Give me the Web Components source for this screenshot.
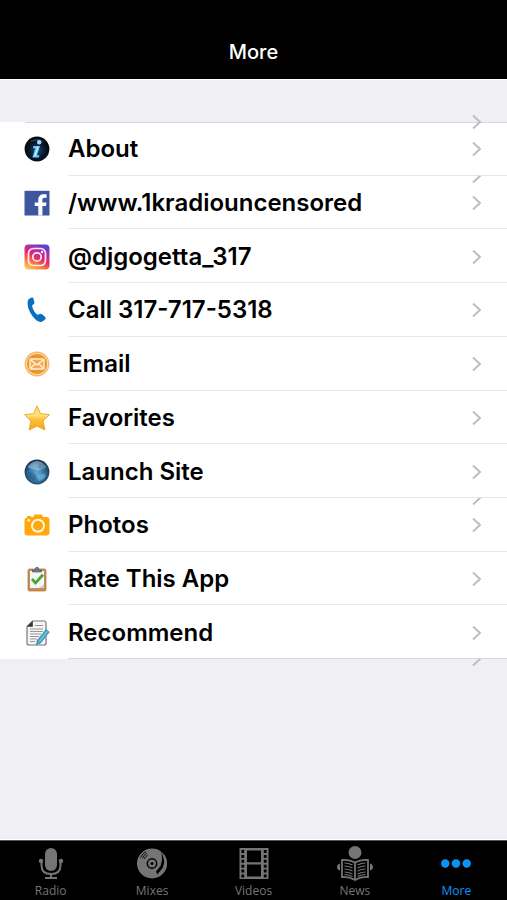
<!DOCTYPE html>
<html lang="en">
<head>
<meta charset="utf-8">
<meta name="viewport" content="width=device-width, initial-scale=1">
<title>More</title>
<style>
    body {
        margin: 0;
        background: #efeff4;
        font-family: Inter, "Liberation Sans", sans-serif;
    }
</style>
</head>
<body>
<more-screen>
    <nav-header slot="header">More</nav-header>
    <more-list>
        <more-row icon="about" href="#about">About</more-row>
        <more-row icon="facebook" href="#facebook" trace>/www.1kradiouncensored</more-row>
        <more-row icon="instagram" href="#instagram">@djgogetta_317</more-row>
        <more-row icon="call" href="tel:317-717-5318">Call 317-717-5318</more-row>
        <more-row icon="email" href="#email">Email</more-row>
        <more-row icon="favorites" href="#favorites">Favorites</more-row>
        <more-row icon="site" href="#site">Launch Site</more-row>
        <more-row icon="photos" href="#photos" trace>Photos</more-row>
        <more-row icon="rate" href="#rate">Rate This App</more-row>
        <more-row icon="recommend" href="#recommend">Recommend</more-row>
    </more-list>
    <tab-bar slot="footer">
        <tab-item icon="radio" href="#radio">Radio</tab-item>
        <tab-item icon="mixes" href="#mixes">Mixes</tab-item>
        <tab-item icon="videos" href="#videos">Videos</tab-item>
        <tab-item icon="news" href="#news">News</tab-item>
        <tab-item icon="more" href="#more" selected>More</tab-item>
    </tab-bar>
</more-screen>

<script>
"use strict";

const rowIcons = {
    about: `
        <defs>
            <radialGradient id="g" cx=".5" cy=".55" r=".5">
                <stop offset="0" stop-color="#1b4f78"/><stop offset=".6" stop-color="#0a1a2c"/><stop offset="1" stop-color="#04070d"/>
            </radialGradient>
        </defs>
        <circle cx="13" cy="13" r="12.4" fill="url(#g)"/>
        <path d="M5 6.500Q13-1 21 6.500Q13 3.500 5 6.500z" fill="#4a5d6d" opacity=".5"/>
        <circle cx="15.200" cy="6.300" r="2.200" fill="#9adcff"/>
        <path d="M9.500 10h6.500l-3 9.200h2.500l-.7 2.300H8.300l3-9.200H8.900z" fill="#74c8fb"/>
        <path d="M13.900 11l-3.100 9.600" stroke="#d8f4ff" stroke-width="1"/>`,
    facebook: `
        <path d="M.5.800h25v24.700H.5z" fill="#3c579e"/>
        <path d="M14.300 25.500V16h-3.600v-3.500h3.600V9.700c0-3.600 2.200-5.500 5.400-5.500 1.400 0 2.300.1 2.900.2v3.300h-2c-1.700 0-2.200.8-2.200 2.100v2.700h4.100l-.6 3.500h-3.500v9.500z" fill="#fff"/>`,
    instagram: `
        <defs>
            <linearGradient id="g" x1=".15" y1="1" x2=".65" y2="0">
                <stop offset="0" stop-color="#ffca55"/><stop offset=".28" stop-color="#fb7c38"/><stop offset=".52" stop-color="#e42c67"/><stop offset=".76" stop-color="#b42caa"/><stop offset="1" stop-color="#5c43cf"/>
            </linearGradient>
        </defs>
        <rect x=".5" y=".5" width="25" height="25" rx="4" fill="url(#g)"/>
        <g fill="none" stroke="#ffeaf3" stroke-width="1.700">
            <rect x="4.500" y="4.500" width="17" height="17" rx="5"/><circle cx="13" cy="13" r="4.200"/>
        </g>
        <circle cx="18" cy="8" r="1.200" fill="#fff"/>`,
    call: `
        <path d="M4 3.200C5 1.600 7.600.400 8.500.600c1 .1 2.300 5.200 1.800 6-.5.900-1.900 1.200-2.100 2.100-.3 1.500 2.800 7.600 5 8.800 1.200.6 2.300-.9 3.400-.7 1 .2 5.100 3.100 5.100 4.100 0 1.200-2.800 4-5.200 4C11 24.900 1.500 11.500 4 3.200z" fill="#0b6fc0"/>`,
    email: `
        <circle cx="13" cy="13" r="12.400" fill="#f6b86c"/>
        <circle cx="13" cy="13" r="10.600" fill="#ee962d" stroke="#ffe1b5" stroke-width="1"/>
        <g fill="#f6a94e" stroke="#fff3df" stroke-width="1.300" stroke-linejoin="round">
            <rect x="6" y="8" width="14" height="10" rx="1"/>
            <path d="M6.300 8.500l6.700 5.500 6.700-5.500M6.300 17.700l4.800-5M19.700 17.700l-4.800-5" fill="none"/>
        </g>`,
    favorites: `
        <defs>
            <linearGradient id="g" x1="0" y1="0" x2="0" y2="1">
                <stop offset="0" stop-color="#ffd45a"/><stop offset=".4" stop-color="#ffe27c"/><stop offset=".55" stop-color="#ffbf38"/><stop offset="1" stop-color="#f7a51d"/>
            </linearGradient>
        </defs>
        <path d="M13 .8l3.500 7.900 8.900.9-6.300 6.400 1.900 9L13 21.100l-8 3.900 1.900-9L.6 9.600l8.900-.9z" fill="url(#g)" stroke="#e9a52b" stroke-width=".9" stroke-linejoin="round"/>`,
    site: `
        <defs>
            <radialGradient id="g" cx=".5" cy=".55" r=".52">
                <stop offset="0" stop-color="#62abd6"/><stop offset=".65" stop-color="#3472a0"/><stop offset="1" stop-color="#18324e"/>
            </radialGradient>
        </defs>
        <circle cx="13" cy="13" r="12.400" fill="url(#g)"/>
        <path d="M3.500 8q9.500-12 19 0-5 4-9.500 3.500T3.500 8z" fill="#b9d8ea" opacity=".5"/>
        <path d="M15 4l6 2 2 6-4 2-2-3-3-2z" fill="#17395a" opacity=".2"/>
        <path d="M4 13l6 1 3 4-3 4-5-4z" fill="#17395a" opacity=".3"/>
        <path d="M12 17q5-3 10-1-2 5-7 6z" fill="#79c3e8" opacity=".5"/>`,
    photos: `
        <path d="M3 5.500V4h4v1h2l1.500-2.500h7L19 5h3.500Q25.500 5 25.500 8v12.500q0 3-3 3h-19q-3 0-3-3V8Q.5 6 3 5.500z" fill="#ffa70b"/>
        <circle cx="14" cy="13.800" r="6" fill="none" stroke="#fff8e6" stroke-width="2"/>
        <circle cx="4.700" cy="8.500" r="1.400" fill="#fff3d3"/>`,
    rate: `
        <rect x="4" y="3" width="18" height="22" rx="1.500" fill="#c98c51" stroke="#a8713e" stroke-width=".7"/>
        <path d="M6 5h14v17H6z" fill="#f3f6f8"/>
        <path d="M20 18v4h-5z" fill="#cbd0d3"/>
        <path d="M8.500 6V4h2.700q0-3 1.800-3t1.800 3h2.700v2z" fill="#727b84" stroke="#4a525c" stroke-width=".6"/>
        <path d="M8 13l3.500 4L19 8.800" fill="none" stroke="#48a82c" stroke-width="2.800"/>`,
    recommend: `
        <path d="M8.500 1h12Q22 1 22 3v20q0 2-2 2H5q-2 0-2-2V6.500z" fill="#f5f5f5" stroke="#777" stroke-width="1.200"/>
        <path d="M8.800 1v5.700H3z" fill="#333"/>
        <path d="M11 5.500h8M6 9h13M6 11.500h13M6 14h11M6 16.500h9M6 19h7M6 21.500h5" stroke="#999" stroke-width="1.200"/>
        <path d="M22 9.500l3.400 2.400-8.700 11-4.300 1.900.9-4.500z" fill="#43a6cd" stroke="#2b7798" stroke-width=".6"/>
        <path d="M23.200 11.300l-7.700 10.200" stroke="#a5dff1" stroke-width=".8"/>`
};

// 40x34 artboards, drawn in the colour of the tab
const tabIcons = {
    radio: `
        <rect x="14" y="1" width="12" height="23" rx="6" fill="currentColor"/>
        <path d="M10.500 13v5.500q0 8.500 9.500 8.500t9.500-8.500V13" fill="none" stroke="currentColor" stroke-width="2"/>
        <path d="M19 26h2v4h5v2H14v-2h5z" fill="currentColor"/>
        <circle cx="10" cy="14" r="2.200" fill="currentColor"/><circle cx="30" cy="14" r="2.200" fill="currentColor"/>`,
    mixes: `
        <circle cx="20" cy="16.500" r="15" fill="currentColor"/>
        <circle cx="20" cy="16.500" r="4.700" fill="none" stroke="#000" stroke-width="1.500"/>
        <circle cx="20" cy="16.500" r="1.500" fill="#000"/>
        <g fill="none" stroke="#000" stroke-width=".9">
            <path d="M8.500 10.500q2-4 5.500-6M10.300 11.300q1.600-3.500 4.700-5M12 12q1.200-2.400 3.600-3.700"/>
        </g>
        <path d="M29.500 4.500l3 10-2 7-5 6-1.500-3 4.500-5.500 1.500-6z" fill="#000"/>
        <path d="M31.500 6.500q5 7 3 14-2.500 6-9.500 9l2-4 5-6q1-6-.5-13z" fill="currentColor"/>`,
    videos: `
        <path d="M5.500 1h29v31h-29z" fill="currentColor"/>
        <path d="M13 3.500h14v11.700H13zM13 17.500h14v12H13z" fill="#000"/>
        <path d="M7.400 3h2.800v3H7.400zm0 4.900h2.800v3H7.400zm0 4.900h2.800v3H7.400zm0 4.900h2.800v3H7.400zm0 4.900h2.800v3H7.400zm0 4.900h2.800v3H7.400zM29.800 3h2.800v3h-2.800zm0 4.900h2.800v3h-2.800zm0 4.900h2.800v3h-2.800zm0 4.900h2.800v3h-2.800zm0 4.900h2.800v3h-2.800zm0 4.900h2.800v3h-2.800z" fill="#000"/>`,
    news: `
        <circle cx="20" cy="5.500" r="6.500" fill="currentColor"/>
        <path d="M7 13q7-1 13 2.500Q26 12 33 13v17q-7-.5-13 3-6-3.500-13-3z" fill="#000" stroke="currentColor" stroke-width="1.800"/>
        <path d="M20 15.500v17" stroke="currentColor" stroke-width="1.800"/>
        <path d="M9.500 16q4 0 8 2M9.500 19q4 0 8 2M9.500 22q4 0 8 2M9.500 25q4 0 8 2M9.500 27.500q4 0 8 2M30.500 16q-4 0-8 2M30.500 19q-4 0-8 2M30.500 22q-4 0-8 2M30.500 25q-4 0-8 2M30.500 27.500q-4 0-8 2" fill="none" stroke="currentColor" stroke-width="1.200"/>
        <path d="M5 16.500q-3 1-3 3.500t3 3.500zM35 16.500q3 1 3 3.500t-3 3.500z" fill="currentColor"/>`,
    more: `
        <g fill="currentColor"><circle cx="9.300" cy="16.500" r="4.200"/><circle cx="20" cy="16.500" r="4.200"/><circle cx="30.700" cy="16.500" r="4.200"/></g>`
};

const chevron = `
    <svg class="chevron" viewBox="0 0 12 16" width="12" height="16" aria-hidden="true">
        <path d="M3 1.500L10 8 3 14.500" fill="none" stroke="#bebec2" stroke-width="2"/>
    </svg>`;

/**
 * Full height column: header, scrolling content, tab bar.
 */
class MoreScreen extends HTMLElement {
    constructor() {
        super();
        this.attachShadow({ mode: "open" });
        this.shadowRoot.innerHTML = `
            <style>
                :host {
                    display: flex;
                    flex-direction: column;
                    min-height: 100vh;
                }
                main {
                    flex: 1;
                    display: flex;
                    flex-direction: column;
                    padding: 42px 0 180px;
                    border: solid #fff;
                    border-width: 1px 0;
                }
            </style>
            <slot name="header"></slot>
            <main><slot></slot></main>
            <slot name="footer"></slot>
        `;
    }
}
customElements.define("more-screen", MoreScreen);

class NavHeader extends HTMLElement {
    constructor() {
        super();
        this.attachShadow({ mode: "open" });
        this.shadowRoot.innerHTML = `
            <style>
                :host {
                    display: block;
                    padding: 38px 16px 13px;
                    background: #000;
                    color: #fff;
                    text-align: center;
                }
                h1 {
                    margin: 0;
                    font-size: 20px;
                    line-height: 28px;
                    font-weight: 500;
                }
            </style>
            <header><h1><slot></slot></h1></header>
        `;
    }
}
customElements.define("nav-header", NavHeader);

class MoreList extends HTMLElement {
    constructor() {
        super();
        this.attachShadow({ mode: "open" });
        this.shadowRoot.innerHTML = `
            <style>
                :host {
                    flex: 1;
                    display: flex;
                    flex-direction: column;
                    position: relative;
                    background: #fff;
                }
                /* edge lines sit over the first and last row */
                :host::before, :host::after {
                    content: "";
                    position: absolute;
                    right: 0;
                    height: 1px;
                    background: #d8d8dc;
                }
                :host::before {
                    top: 0;
                    left: 25px;
                }
                :host::after {
                    bottom: 0;
                    left: 68px;
                }
                nav {
                    flex: 1;
                    display: flex;
                    flex-direction: column;
                }
                .chevron {
                    position: absolute;
                    right: 25px;
                    z-index: 1;
                }
                .first {
                    top: -8px;
                }
                .last {
                    bottom: -8px;
                    clip-path: inset(50% 0 0 0);
                }
            </style>
            <nav aria-label="More"><slot></slot></nav>
            ${chevron.replace('"chevron"', '"chevron first"')}
            ${chevron.replace('"chevron"', '"chevron last"')}
        `;
    }
}
customElements.define("more-list", MoreList);

/**
 * One link of the list. With the trace attribute, the lower half of a second
 * chevron hangs from the top separator.
 */
class MoreRow extends HTMLElement {
    constructor() {
        super();
        this.attachShadow({ mode: "open" });
    }
    connectedCallback() {
        this.shadowRoot.innerHTML = `
            <style>
                :host {
                    flex: 1;
                    display: flex;
                    min-height: 44px;
                    position: relative;
                }
                a {
                    flex: 1;
                    display: flex;
                    align-items: center;
                    padding: 1px 25px 0 24px;
                    color: #000;
                    text-decoration: none;
                }
                .icon {
                    flex: none;
                    margin-right: 18px;
                }
                .label {
                    flex: 1;
                    font-size: 24px;
                    line-height: 32px;
                    font-weight: 600;
                }
                .chevron {
                    flex: none;
                }
                .trace {
                    position: absolute;
                    top: -8px;
                    right: 25px;
                    height: 16px;
                    clip-path: inset(50% 0 0 0);
                }
                .trace svg {
                    display: block;
                }
                :host(:not(:first-child))::before {
                    content: "";
                    position: absolute;
                    top: -1px;
                    left: 68px;
                    right: 0;
                    height: 1px;
                    background: #e8e8ea;
                }
            </style>
            <a href="${this.getAttribute('href')}">
                <svg class="icon" viewBox="0 0 26 26" width="26" height="26" aria-hidden="true">${rowIcons[this.getAttribute('icon')]}</svg>
                <span class="label"><slot></slot></span>
                ${chevron}
            </a>
            ${this.hasAttribute('trace') ? `<div class="trace">${chevron}</div>` : ''}
        `;
    }
}
customElements.define("more-row", MoreRow);

class TabBar extends HTMLElement {
    constructor() {
        super();
        this.attachShadow({ mode: "open" });
        this.shadowRoot.innerHTML = `
            <style>
                :host {
                    display: block;
                    background: #000;
                    border-top: 1px solid #555;
                }
                nav {
                    display: flex;
                }
            </style>
            <nav aria-label="Tabs"><slot></slot></nav>
        `;
    }
}
customElements.define("tab-bar", TabBar);

class TabItem extends HTMLElement {
    constructor() {
        super();
        this.attachShadow({ mode: "open" });
    }
    connectedCallback() {
        this.shadowRoot.innerHTML = `
            <style>
                :host {
                    flex: 1;
                    color: #757575;
                }
                :host([selected]) {
                    color: #0a95f5;
                }
                a {
                    display: flex;
                    flex-direction: column;
                    align-items: center;
                    gap: 1px;
                    padding: 6px 0 0;
                    color: inherit;
                    text-decoration: none;
                    font-family: "Open Sans", "Noto Sans", sans-serif;
                    font-size: 12px;
                    line-height: 18px;
                    font-weight: 500;
                }
                svg {
                    overflow: visible;
                }
            </style>
            <a href="${this.getAttribute('href')}">
                <svg viewBox="0 0 40 34" width="40" height="34" aria-hidden="true">${tabIcons[this.getAttribute('icon')]}</svg>
                <span><slot></slot></span>
            </a>
        `;
    }
}
customElements.define("tab-item", TabItem);
</script>
</body>
</html>
